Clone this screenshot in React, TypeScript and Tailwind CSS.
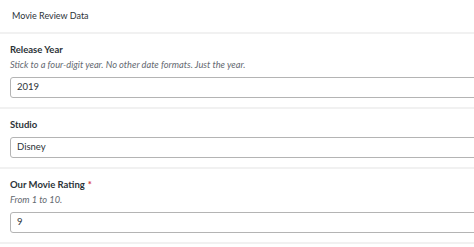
const fields = [
  {
    label: "Release Year",
    help: "Stick to a four-digit year. No other date formats. Just the year.",
    value: "2019",
  },
  { label: "Studio", value: "Disney" },
  { label: "Our Movie Rating", required: true, help: "From 1 to 10.", value: "9" },
];

export default function App() {
  return (
    <div
      className="h-screen w-full overflow-hidden bg-white text-[#2c3338]"
      style={{ fontFamily: 'Lato, "Open Sans", sans-serif' }}
    >
      <div className="w-[500px]">
        <div className="flex h-[32px] items-center px-3 text-[9px]">Movie Review Data</div>
        {fields.map((f) => (
          <div key={f.label} className="border-t-2 border-[#f1f1f1] px-[10px] pt-2 pb-[9px]">
            <div className="text-[9.5px] font-bold leading-[15px]">
              {f.label}
              {f.required && <span className="ml-[3px] text-[#d63638]">*</span>}
            </div>
            {f.help && (
              <div className="text-[9.25px] italic leading-[15px] text-[#646970]">{f.help}</div>
            )}
            <div className="mt-[5px] flex h-[21px] items-center rounded-[3px] border border-[#b4b4b4] px-[6px] text-[9.5px]">
              {f.value}
            </div>
          </div>
        ))}
        <div className="border-t-2 border-[#f1f1f1]" />
      </div>
    </div>
  );
}
